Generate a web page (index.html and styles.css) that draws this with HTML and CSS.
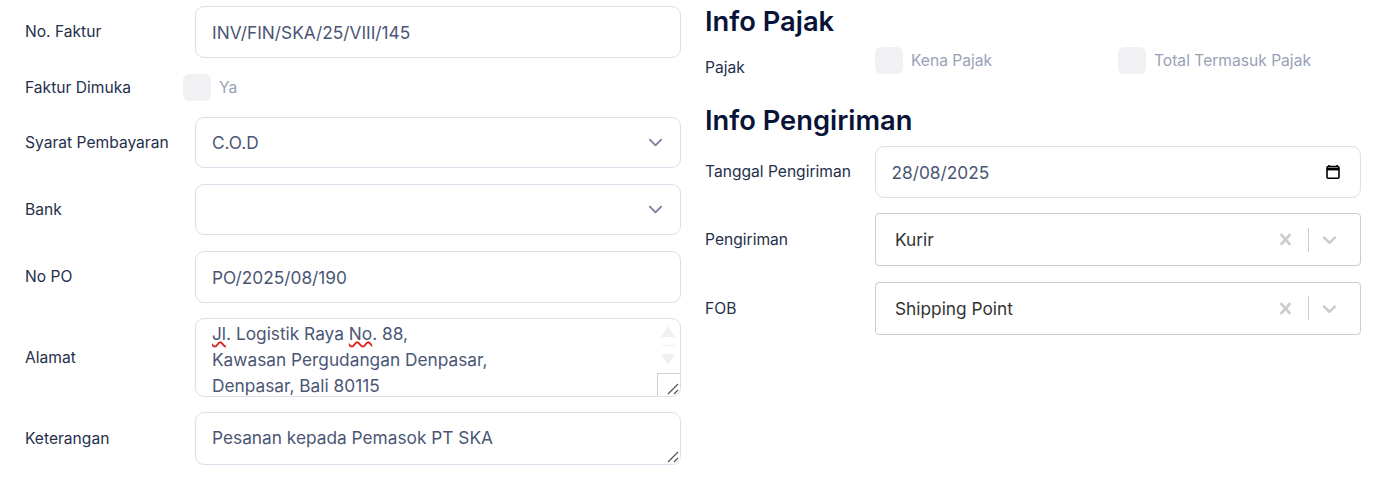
FILE: index.html
```html
<!DOCTYPE html>
<html lang="id">
<head>
    <meta charset="UTF-8">
    <meta name="viewport" content="width=device-width, initial-scale=1.0">
    <title>Faktur</title>
    <link rel="stylesheet" href="styles.css">
</head>
<body>
    <div class="container">
        <div class="col col-left">
            <div class="row">
                <div class="label">No. Faktur</div>
                <div class="field">INV/FIN/SKA/25/VIII/145</div>
            </div>
            <div class="row row-check">
                <div class="label">Faktur Dimuka</div>
                <div class="check check-shift"><span class="box"></span><span>Ya</span></div>
            </div>
            <div class="row">
                <div class="label">Syarat Pembayaran</div>
                <div class="field field-select">C.O.D
                    <svg class="chevron" viewBox="0 0 16 16"><path d="M2 5l6 6 6-6" fill="none" stroke="#78829d" stroke-width="2" stroke-linecap="round" stroke-linejoin="round"/></svg>
                </div>
            </div>
            <div class="row">
                <div class="label">Bank</div>
                <div class="field field-select">
                    <svg class="chevron" viewBox="0 0 16 16"><path d="M2 5l6 6 6-6" fill="none" stroke="#78829d" stroke-width="2" stroke-linecap="round" stroke-linejoin="round"/></svg>
                </div>
            </div>
            <div class="row">
                <div class="label">No PO</div>
                <div class="field">PO/2025/08/190</div>
            </div>
            <div class="row row-address">
                <div class="label">Alamat</div>
                <div class="field field-area">
                    <div class="area-text"><span class="typo">Jl</span>. Logistik Raya <span class="typo">No</span>. 88,<br>Kawasan Pergudangan Denpasar,<br>Denpasar, Bali 80115</div>
                    <div class="scrollbar">
                        <span class="arrow arrow-up"></span>
                        <span class="arrow-line"></span>
                        <span class="arrow arrow-down"></span>
                    </div>
                    <div class="corner">
                        <svg class="grip" viewBox="0 0 12 12"><path d="M1 11L11 1M7 11l4-4" fill="none" stroke="#555" stroke-width="1.2"/></svg>
                    </div>
                </div>
            </div>
            <div class="row">
                <div class="label">Keterangan</div>
                <div class="field field-note">Pesanan kepada Pemasok PT SKA
                    <svg class="grip" viewBox="0 0 12 12"><path d="M1 11L11 1M7 11l4-4" fill="none" stroke="#555" stroke-width="1.2"/></svg>
                </div>
            </div>
        </div>

        <div class="col col-right">
            <h2 class="title-first">Info Pajak</h2>
            <div class="row row-tax">
                <div class="label label-tax">Pajak</div>
                <div class="check check-tax"><span class="box"></span><span>Kena Pajak</span></div>
                <div class="check"><span class="box"></span><span>Total Termasuk Pajak</span></div>
            </div>
            <h2 class="title-second">Info Pengiriman</h2>
            <div class="row">
                <div class="label">Tanggal Pengiriman</div>
                <div class="field field-date">28/08/2025
                    <svg class="calendar" viewBox="0 0 16 16"><path d="M4 1v2M12 1v2" stroke="#000" stroke-width="1.6" fill="none"/><rect x="2" y="2.6" width="12" height="11.6" rx="1.2" fill="none" stroke="#000" stroke-width="1.6"/><path d="M2 5.2h12" stroke="#000" stroke-width="2.4"/></svg>
                </div>
            </div>
            <div class="row">
                <div class="label">Pengiriman</div>
                <div class="picker">Kurir
                    <div class="picker-tools">
                        <svg class="tool-x" viewBox="0 0 20 20"><path d="M14.348 14.849c-0.469 0.469-1.229 0.469-1.697 0l-2.651-3.030-2.651 3.029c-0.469 0.469-1.229 0.469-1.697 0-0.469-0.469-0.469-1.229 0-1.697l2.758-3.15-2.759-3.152c-0.469-0.469-0.469-1.228 0-1.697s1.228-0.469 1.697 0l2.652 3.031 2.651-3.031c0.469-0.469 1.228-0.469 1.697 0s0.469 1.229 0 1.697l-2.758 3.152 2.758 3.15c0.469 0.469 0.469 1.229 0 1.698z" fill="#ccc"/></svg>
                        <span class="tool-line"></span>
                        <svg class="tool-down" viewBox="0 0 20 20"><path d="M4.516 7.548c0.436-0.446 1.043-0.481 1.576 0l3.908 3.747 3.908-3.747c0.533-0.481 1.141-0.446 1.574 0 0.436 0.445 0.408 1.197 0 1.615-0.406 0.418-4.695 4.502-4.695 4.502-0.217 0.223-0.502 0.335-0.787 0.335s-0.57-0.112-0.789-0.335c0 0-4.287-4.084-4.695-4.502s-0.436-1.17 0-1.615z" fill="#ccc"/></svg>
                    </div>
                </div>
            </div>
            <div class="row">
                <div class="label">FOB</div>
                <div class="picker">Shipping Point
                    <div class="picker-tools">
                        <svg class="tool-x" viewBox="0 0 20 20"><path d="M14.348 14.849c-0.469 0.469-1.229 0.469-1.697 0l-2.651-3.030-2.651 3.029c-0.469 0.469-1.229 0.469-1.697 0-0.469-0.469-0.469-1.229 0-1.697l2.758-3.15-2.759-3.152c-0.469-0.469-0.469-1.228 0-1.697s1.228-0.469 1.697 0l2.652 3.031 2.651-3.031c0.469-0.469 1.228-0.469 1.697 0s0.469 1.229 0 1.697l-2.758 3.152 2.758 3.15c0.469 0.469 0.469 1.229 0 1.698z" fill="#ccc"/></svg>
                        <span class="tool-line"></span>
                        <svg class="tool-down" viewBox="0 0 20 20"><path d="M4.516 7.548c0.436-0.446 1.043-0.481 1.576 0l3.908 3.747 3.908-3.747c0.533-0.481 1.141-0.446 1.574 0 0.436 0.445 0.408 1.197 0 1.615-0.406 0.418-4.695 4.502-4.695 4.502-0.217 0.223-0.502 0.335-0.787 0.335s-0.57-0.112-0.789-0.335c0 0-4.287-4.084-4.695-4.502s-0.436-1.17 0-1.615z" fill="#ccc"/></svg>
                    </div>
                </div>
            </div>
        </div>
    </div>
</body>
</html>
```

FILE: styles.css
```css
html, body {
    margin: 0;
    padding: 0;
    background-color: #fff;
    overflow: hidden;
}
body {
    font-family: Inter, "Liberation Sans", sans-serif;
    font-size: 15.6px;
    color: #252f4a;
}
.container {
    display: flex;
    gap: 24px;
    padding: 6px 25px 0;
}
.col {
    display: flex;
    flex-direction: column;
    width: 656px;
}
.row {
    display: flex;
    align-items: center;
    margin-bottom: 15.6px;
}
.label {
    width: 170px;
    flex-shrink: 0;
    color: #252f4a;
}
.field {
    position: relative;
    display: flex;
    align-items: center;
    box-sizing: border-box;
    flex: 1;
    height: 51.6px;
    padding: 1px 16px 0;
    border: 1px solid #dbdfe9;
    border-radius: 9px;
    font-size: 17.3px;
    font-weight: 430;
    color: #4b5675;
}
.field-select {
    justify-content: space-between;
}
.chevron {
    position: absolute;
    right: 17px;
    top: 17px;
    width: 15px;
    height: 15px;
}
.row-check {
    height: 27px;
    margin-top: 0.8px;
}
.check {
    display: flex;
    align-items: center;
    gap: 8px;
    font-size: 15.6px;
    font-weight: 400;
    color: #99a1b7;
}
.check-shift {
    margin-left: -12px;
}
.box {
    display: block;
    width: 28px;
    height: 27px;
    border-radius: 6px;
    background-color: #f1f1f4;
}
.row-address {
    height: 78.6px;
}
.field-area {
    height: 78.6px;
    padding: 0;
    align-items: flex-start;
    overflow: hidden;
}
.area-text {
    margin-top: 1.5px;
    padding: 0 16px;
    line-height: 26px;
}
.typo {
    text-decoration: underline wavy #e02020 1.5px;
    text-decoration-skip-ink: none;
}
.scrollbar {
    position: absolute;
    right: 5px;
    top: 7px;
    width: 14px;
    display: flex;
    flex-direction: column;
    align-items: center;
}
.arrow {
    width: 0;
    height: 0;
    border-left: 7px solid transparent;
    border-right: 7px solid transparent;
}
.arrow-up {
    border-bottom: 11px solid #f0f0f0;
}
.arrow-down {
    border-top: 11px solid #f0f0f0;
}
.arrow-line {
    width: 13px;
    height: 1px;
    margin: 8px 0;
    background-color: #f0f0f0;
}
.corner {
    position: absolute;
    right: 0;
    bottom: 0;
    width: 23px;
    height: 23px;
    border-top: 1px solid #d0d0d0;
    border-left: 1px solid #d0d0d0;
    box-sizing: border-box;
}
.grip {
    position: absolute;
    right: 1px;
    bottom: 1px;
    width: 12px;
    height: 12px;
}
.field-note {
    height: 52.6px;
    padding-top: 0;
    padding-bottom: 3px;
}
.field-date {
    padding-left: 15.5px;
}
h2 {
    margin: 0;
    font-size: 27.3px;
    font-weight: 600;
    line-height: 32px;
    color: #071437;
}
.title-first {
    margin-bottom: 9px;
}
.title-second {
    margin-bottom: 9px;
}
.row-tax {
    align-items: flex-start;
    margin-bottom: 28px;
}
.label-tax {
    margin-top: 11px;
}
.check-tax {
    width: 243px;
}
.calendar {
    position: absolute;
    right: 19px;
    top: 17px;
    width: 16px;
    height: 16px;
}
.picker {
    position: relative;
    display: flex;
    align-items: center;
    box-sizing: border-box;
    flex: 1;
    height: 53px;
    padding: 0 19px;
    border: 1px solid #ccc;
    border-radius: 4px;
    font-size: 17.3px;
    font-weight: 430;
    color: #333;
}
.picker-tools {
    position: absolute;
    right: 0;
    top: 0;
    bottom: 0;
    display: flex;
    align-items: center;
}
.tool-x {
    width: 23px;
    height: 23px;
    margin-right: 11px;
}
.tool-line {
    width: 1px;
    height: 24px;
    background-color: #ccc;
}
.tool-down {
    width: 23px;
    height: 23px;
    margin: 0 19px 0 9px;
}
```
